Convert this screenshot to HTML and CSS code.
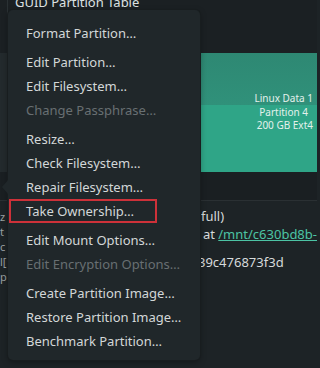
FILE: index.html
```html
<!DOCTYPE html>
<html>
<head>
<meta charset="utf-8">
<link rel="stylesheet" href="styles.css">
</head>
<body>
<div class="window">
  <div class="top">
    <div class="edge"></div>
    <div class="title">GUID Partition Table</div>
  </div>
  <div class="disk">
    <div class="disk-left"></div>
    <div class="part">
      <div class="part-top"><span class="lbl-name">Linux Data 1</span></div>
      <div class="part-bottom">
        <span>Partition 4</span>
        <span>200 GB Ext4</span>
      </div>
    </div>
  </div>
  <div class="bar"></div>
  <div class="details">
    <div class="row"><span class="k">z</span><span class="v">full)</span></div>
    <div class="row"><span class="k">t</span><span class="v v2">at <a class="link">/mnt/c630bd8b-</a></span></div>
    <div class="row"><span class="k">c</span><span class="v"></span></div>
    <div class="row"><span class="k">l[</span><span class="v v3">39c476873f3d</span></div>
    <div class="row"><span class="k">p</span><span class="v"></span></div>
  </div>
</div>

<div class="popover">
  <div class="arrow"></div>
  <div class="group">
    <div class="item">Format Partition…</div>
  </div>
  <div class="group">
    <div class="item">Edit Partition…</div>
    <div class="item">Edit Filesystem…</div>
    <div class="item disabled">Change Passphrase…</div>
  </div>
  <div class="group">
    <div class="item">Resize…</div>
    <div class="item">Check Filesystem…</div>
    <div class="item">Repair Filesystem…</div>
    <div class="item highlight">Take Ownership…</div>
  </div>
  <div class="group">
    <div class="item">Edit Mount Options…</div>
    <div class="item disabled">Edit Encryption Options…</div>
  </div>
  <div class="group">
    <div class="item">Create Partition Image…</div>
    <div class="item">Restore Partition Image…</div>
    <div class="item">Benchmark Partition…</div>
  </div>
</div>
</body>
</html>
```
FILE: styles.css
```css
html, body {
  margin: 0;
  padding: 0;
}
body {
  width: 317px;
  height: 368px;
  overflow: hidden;
  background: #1d2326;
  font-family: "Noto Sans", "DejaVu Sans", sans-serif;
  color: #d6dadb;
  position: relative;
}
.window {
  display: flex;
  flex-direction: column;
}
.top {
  height: 53px;
  display: flex;
  background: #1b2023;
}
.edge {
  width: 7px;
  border-right: 1px solid #2a3134;
}
.title {
  font-size: 13px;
  margin-top: -7px;
  padding-left: 7px;
  color: #dde0e1;
  line-height: 18px;
}
.disk {
  height: 119px;
  display: flex;
}
.disk-left {
  width: 7px;
  background: #232a2d;
  border-right: 1px solid #2c3437;
}
.part {
  flex: 1;
  display: flex;
  flex-direction: column;
  color: #e4f1ec;
  font-size: 10px;
  line-height: 13px;
}
.part-top {
  height: 52px;
  background: linear-gradient(#2e8873, #30917a);
  display: flex;
  align-items: flex-end;
  justify-content: flex-end;
  padding-right: 4px;
  box-sizing: border-box;
}
.lbl-name {
  margin-bottom: 0px;
}
.part-bottom {
  flex: 1;
  background: #2fa587;
  display: flex;
  flex-direction: column;
  align-items: flex-end;
  padding-right: 4px;
  padding-top: 1px;
}
.part-bottom span:first-child {
  margin-right: 5px;
}
.bar {
  height: 28px;
  background: #1a1f22;
  border-bottom: 1px solid #2a3033;
}
.details {
  padding-top: 5px;
  font-size: 13px;
  line-height: 15px;
}
.row {
  display: flex;
  height: 15px;
}
.row:nth-child(1) { margin-top: 3px; }
.k {
  width: 8px;
  overflow: hidden;
  color: #9aa0a2;
  font-size: 11px;
}
.v {
  margin-left: 193px;
  white-space: nowrap;
  color: #d6dadb;
}
.v2 { margin-left: 195px; margin-top: 3px; }
.v3 { margin-left: 190px; margin-top: 1px; }
.link {
  color: #4cc3a4;
  text-decoration: underline;
}

.popover {
  position: absolute;
  left: 8px;
  top: 10px;
  width: 192px;
  height: 350px;
  box-sizing: border-box;
  background: #20272a;
  border-radius: 5px;
  box-shadow: 0 0 0 1px #181d1f, 0 2px 6px rgba(0,0,0,0.35);
  padding: 11px 0 7px 0;
  display: flex;
  flex-direction: column;
  gap: 5px;
}
.arrow {
  position: absolute;
  left: -6px;
  top: 170px;
  width: 0;
  height: 0;
  border-top: 7px solid transparent;
  border-bottom: 7px solid transparent;
  border-right: 6px solid #20272a;
}
.group {
  display: flex;
  flex-direction: column;
}
.item {
  height: 24px;
  line-height: 24px;
  padding-left: 18px;
  font-size: 13px;
  color: #d3d7d8;
  white-space: nowrap;
  position: relative;
}
.item.disabled {
  color: #686f72;
}
.item.highlight::after {
  content: "";
  position: absolute;
  left: 1px;
  top: 0;
  width: 148px;
  height: 24px;
  box-sizing: border-box;
  border: 2px solid #cd3139;
}
```
